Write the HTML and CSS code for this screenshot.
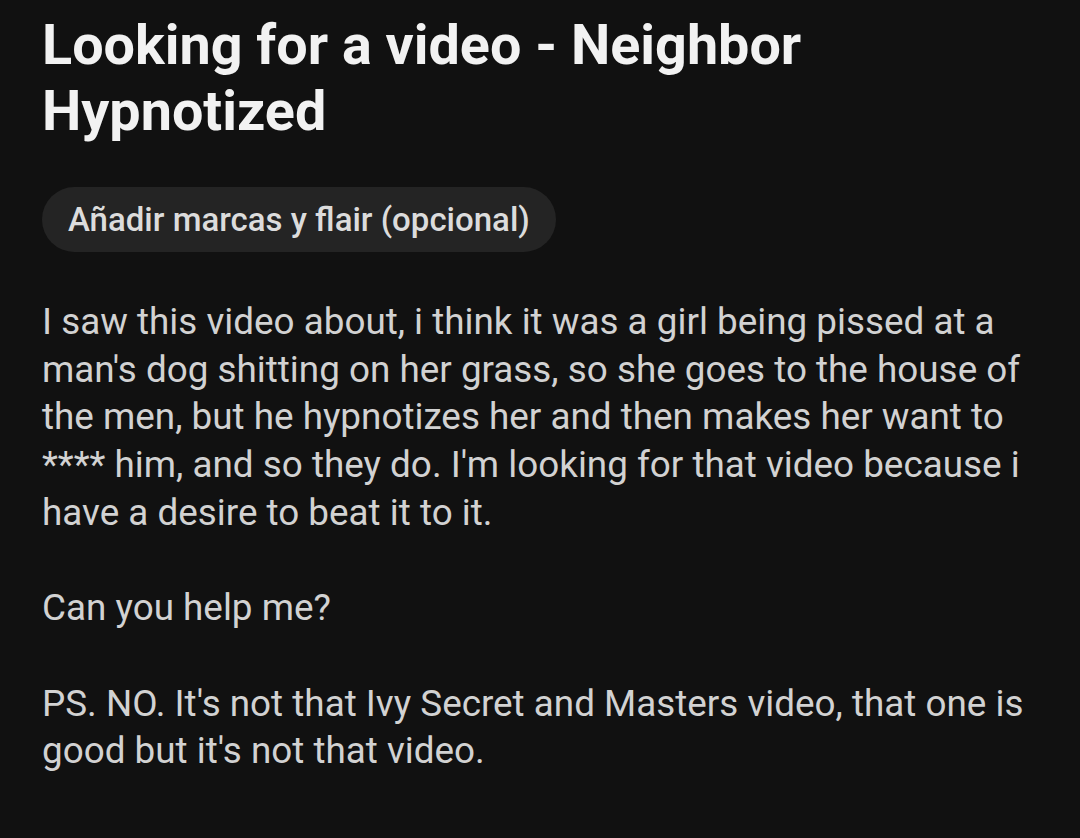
FILE: index.html
```html
<!DOCTYPE html>
<html lang="es">
<head>
  <meta charset="UTF-8">
  <title>Crear publicación</title>
  <link rel="stylesheet" href="styles.css">
</head>
<body>
  <div class="post">
    <h1 class="title">Looking for a video - Neighbor Hypnotized</h1>

    <!-- Botón de marcas -->
    <div class="flair">Añadir marcas y flair (opcional)</div>

    <div class="body-text">
      <p>I saw this video about, i think it was a girl being pissed at a man's dog shitting on her grass, so she goes to the house of the men, but he hypnotizes her and then makes her want to **** him, and so they do. I'm looking for that video because i have a desire to beat it to it.</p>
      <p>Can you help me?</p>
      <p>PS. NO. It's not that Ivy Secret and Masters video, that one is good but it's not that video.</p>
    </div>
  </div>
</body>
</html>
```

FILE: styles.css
```css
* {
  box-sizing: border-box;
  margin: 0;
  padding: 0;
}

body {
  background-color: #111111;
  font-family: Roboto, sans-serif;
  width: 1080px;
  height: 838px;
  overflow: hidden;
}

.post {
  padding: 12px 0 0 42px;
  display: flex;
  flex-direction: column;
  align-items: flex-start;
}

.title {
  font-size: 55.7px;
  font-weight: 700;
  line-height: 66px;
  color: #f2f2f2;
  max-width: 820px;
}

.flair {
  margin-top: 43px;
  background-color: #242424;
  color: #dcdcdc;
  font-size: 33px;
  font-weight: 500;
  height: 65px;
  line-height: 65px;
  padding: 0 26px;
  border-radius: 33px;
}

.body-text {
  margin-top: 46px;
  color: #d2d2d2;
  font-size: 36.85px;
  line-height: 47.7px;
  width: 1000px;
}

.body-text p {
  margin-bottom: 47.7px;
}
```
